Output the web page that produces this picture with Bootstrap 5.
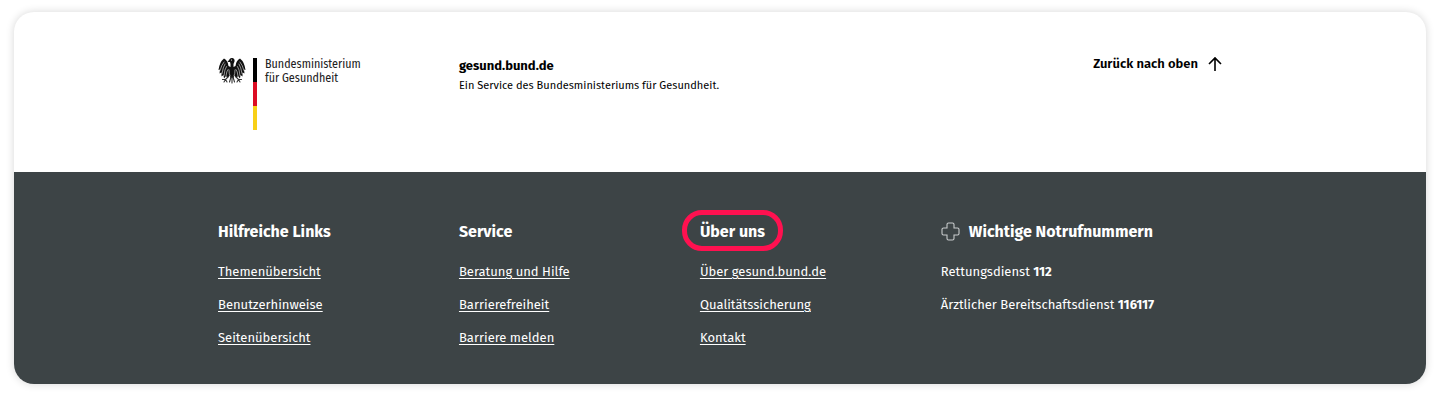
<!DOCTYPE html>
<html lang="de">
<head>
<meta charset="utf-8">
<meta name="viewport" content="width=device-width, initial-scale=1">
<title>gesund.bund.de</title>
<link href="https://cdn.jsdelivr.net/npm/bootstrap@5.3.0/dist/css/bootstrap.min.css" rel="stylesheet">
<style>
  body { font-family: "Fira Sans", "Noto Sans", sans-serif; font-size: 13px; line-height: 20px; color: #000; background: #fff; }
  .site-footer { margin: 12px 14px 16px; border-radius: 20px; overflow: hidden; box-shadow: 0 0 8px rgba(0, 0, 0, .16); }
  .inner { max-width: 1004px; margin: 0 auto; }
  .cols { display: grid; grid-template-columns: repeat(3, 24%) 1fr; }
  .upper { padding: 44px 0 42px; }
  .lower { padding: 48px 0 36px; background: #3d4446; color: #fff; }
  .ministry { font-family: "Fira Sans Condensed", "Open Sans Condensed", "Roboto Condensed", Roboto, sans-serif; font-size: 12px; line-height: 14px; padding-top: 1px; color: #222; }
  .flag { width: 4px; height: 72px; margin: 2px 8px 0 7px; background: linear-gradient(#000 33%, #dc0c23 33% 66%, #f8d017 66%); }
  .site-name { font-size: 13px; }
  .claim { font-size: 11px; }
  .to-top { color: #000; font-weight: 600; line-height: 16px; text-decoration: none; }
  .lower h2 { font-size: 16px; line-height: 24px; font-weight: 700; margin: 0 0 18px; }
  .lower li { margin-bottom: 13px; line-height: 20px; }
  .lower a { color: #fff; text-underline-offset: 2px; text-decoration-thickness: 1px; }
  .ring { position: relative; }
  .ring::after { content: ""; position: absolute; inset: -12px -18px -10px; border: 5px solid #ff1150; border-radius: 20px; }
</style>
</head>
<body>
<footer class="site-footer">
  <div class="upper">
    <div class="inner cols">
      <div class="d-flex align-items-start">
        <svg class="flex-shrink-0" width="28" height="28" viewBox="0 0 56 56" role="img" aria-label="Bundesadler">
          <path fill="#111" d="M12 5Q20 9 21 20L25 22V16L24 12L19 12L22 8Q24 3 29 4Q34 5 33 11L31 16V22L35 20Q36 9 44 5Q53 12 55 28L52 27L53 35L49 33L49 41L45 38L44 45L40 40L37 44L33 39L31 44H25L23 39L19 44L16 40L12 45L11 38L7 41L7 33L3 35L4 27L1 28Q3 12 12 5Z"/>
          <g fill="none" stroke="#fff" stroke-width="1.1" stroke-linecap="round">
            <path d="M12 12Q7 18 4 29M14 16Q10 22 8 35M17 21Q13 26 12 39M20 27Q17 30 16 40M44 12Q49 18 52 29M42 16Q46 22 48 35M39 21Q43 26 44 39M36 27Q39 30 40 40M22 28Q22 36 24 40M34 28Q34 36 32 40"/>
          </g>
          <g fill="none" stroke="#333" stroke-width="2.2" stroke-linecap="round">
            <path d="M28 42V54M26 42L23 52M30 42L33 52M21 41L15 47L9 47M15 47L12 52M15 47L18 52M35 41L41 47L47 47M41 47L44 52M41 47L38 52"/>
          </g>
          <circle cx="27" cy="8" r="1.2" fill="#fff"/>
        </svg>
        <div class="flag flex-shrink-0"></div>
        <div class="ministry text-nowrap">Bundesministerium<br>für Gesundheit</div>
      </div>
      <div>
        <div class="site-name fw-bold">gesund.bund.de</div>
        <div class="claim text-nowrap">Ein Service des Bundesministeriums für Gesundheit.</div>
      </div>
      <div></div>
      <div class="d-flex justify-content-end align-items-start">
        <a class="to-top d-flex align-items-center text-nowrap" href="#">Zurück nach oben
          <svg class="ms-2" width="16" height="16" viewBox="0 0 16 16" fill="none" stroke="#000" stroke-width="1.6" aria-hidden="true"><path d="M9 15V2M3 8L9 2L15 8"/></svg>
        </a>
      </div>
    </div>
  </div>
  <div class="lower">
    <div class="inner cols">
      <section>
        <h2>Hilfreiche Links</h2>
        <ul class="list-unstyled mb-0">
          <li><a href="#">Themenübersicht</a></li>
          <li><a href="#">Benutzerhinweise</a></li>
          <li class="mb-0"><a href="#">Seitenübersicht</a></li>
        </ul>
      </section>
      <section>
        <h2>Service</h2>
        <ul class="list-unstyled mb-0">
          <li><a href="#">Beratung und Hilfe</a></li>
          <li><a href="#">Barrierefreiheit</a></li>
          <li class="mb-0"><a href="#">Barriere melden</a></li>
        </ul>
      </section>
      <section>
        <h2><span class="ring">Über uns</span></h2>
        <ul class="list-unstyled mb-0">
          <li><a href="#">Über gesund.bund.de</a></li>
          <li><a href="#">Qualitätssicherung</a></li>
          <li class="mb-0"><a href="#">Kontakt</a></li>
        </ul>
      </section>
      <section>
        <h2 class="d-flex align-items-center text-nowrap">
          <svg class="me-2 flex-shrink-0" width="20" height="20" viewBox="0 0 20 20" fill="none" stroke="#c9cccd" stroke-width="1.1" aria-hidden="true"><path d="M7.5 1h4A1.500 1.500 0 0 1 13 2.500V6h3.500A1.500 1.500 0 0 1 18 7.500v4a1.500 1.500 0 0 1-1.500 1.500H13v3.500a1.500 1.500 0 0 1-1.500 1.500h-4A1.500 1.500 0 0 1 6 16.500V13H2.500A1.500 1.500 0 0 1 1 11.500v-4A1.500 1.500 0 0 1 2.500 6H6V2.500A1.500 1.500 0 0 1 7.500 1Z"/></svg>
          Wichtige Notrufnummern
        </h2>
        <ul class="list-unstyled mb-0">
          <li>Rettungsdienst <strong>112</strong></li>
          <li class="mb-0">Ärztlicher Bereitschaftsdienst <strong>116117</strong></li>
        </ul>
      </section>
    </div>
  </div>
</footer>
<script src="https://cdn.jsdelivr.net/npm/bootstrap@5.3.0/dist/js/bootstrap.bundle.min.js"></script>
</body>
</html>
